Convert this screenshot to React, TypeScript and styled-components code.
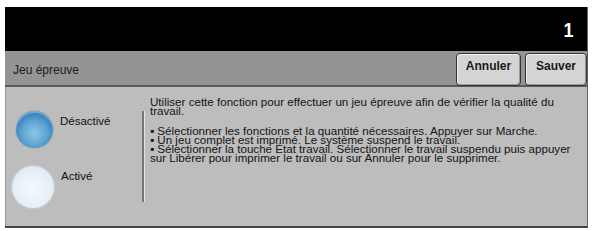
import React, { useState } from "react";
import styled, { createGlobalStyle } from "styled-components";

const GlobalStyle = createGlobalStyle`
  body {
    margin: 0;
    background: #ffffff;
    font-family: "Liberation Sans", Arial, sans-serif;
  }
`;

const options = [
  { id: "off", label: "Désactivé" },
  { id: "on", label: "Activé" },
];

const App: React.FC = () => {
  const [selected, setSelected] = useState<string>("off");

  return (
    <>
      <GlobalStyle />
      <Frame>
        <Header>
          <Counter>1</Counter>
        </Header>
        <TitleBar>
          <Title>Jeu épreuve</Title>
          <ButtonGroup>
            <ActionButton>Annuler</ActionButton>
            <ActionButton>Sauver</ActionButton>
          </ButtonGroup>
        </TitleBar>
        <Body>
          <OptionList>
            {options.map((option) => (
              <OptionRow key={option.id} onClick={() => setSelected(option.id)}>
                <Radio $active={selected === option.id} />
                <OptionLabel>{option.label}</OptionLabel>
              </OptionRow>
            ))}
          </OptionList>
          <Divider />
          <HelpText>
            <p>
              Utiliser cette fonction pour effectuer un jeu épreuve afin de vérifier la qualité du
              travail.
            </p>
            <p>
              ▪ Sélectionner les fonctions et la quantité nécessaires. Appuyer sur Marche.
              <br />▪ Un jeu complet est imprimé. Le système suspend le travail.
              <br />▪ Sélectionner la touche État travail. Sélectionner le travail suspendu puis appuyer
              sur Libérer pour imprimer le travail ou sur Annuler pour le supprimer.
            </p>
          </HelpText>
        </Body>
      </Frame>
    </>
  );
};

export default App;

const Frame = styled.div`
  margin: 7px 0 0 5px;
  width: 583px;
  height: 221px;
  display: flex;
  flex-direction: column;
  border-right: 1px solid #666;
  border-bottom: 2px solid #444;
  box-sizing: border-box;
`;

const Header = styled.div`
  height: 44px;
  background: #000;
  display: flex;
  justify-content: flex-end;
  align-items: center;
  padding-right: 13px;
`;

const Counter = styled.span`
  color: #fff;
  font-weight: bold;
  font-size: 20px;
  padding-top: 3px;
  transform: scaleX(0.9);
`;

const TitleBar = styled.div`
  height: 36px;
  background: #949494;
  border-bottom: 2px solid #5a5a5a;
  display: flex;
  justify-content: space-between;
  align-items: center;
  box-sizing: border-box;
`;

const Title = styled.span`
  font-size: 12px;
  color: #1c1c1c;
  padding-left: 8px;
  padding-top: 3px;
`;

const ButtonGroup = styled.div`
  display: flex;
  gap: 4px;
  align-self: flex-end;
  margin-bottom: -1px;
`;

const ActionButton = styled.button`
  width: 65px;
  height: 33px;
  background: #d4d4d4;
  border: 1px solid #333;
  border-radius: 4px;
  box-shadow: inset 1px 1px 0 #f2f2f2, inset -1px -1px 0 #9a9a9a;
  font-family: "Liberation Sans", Arial, sans-serif;
  font-weight: bold;
  font-size: 12px;
  color: #1a1a1a;
  padding: 0 0 8px;
  &:last-child {
    width: 62px;
  }
`;

const Body = styled.div`
  flex: 1;
  background: #bdbdbd;
  display: flex;
  border-left: 1px solid #9a9a9a;
`;

const OptionList = styled.div`
  width: 136px;
  display: flex;
  flex-direction: column;
  gap: 18px;
  padding: 24px 0 0 6px;
  box-sizing: border-box;
`;

const OptionRow = styled.div`
  display: flex;
  align-items: flex-start;
  gap: 7px;
  cursor: pointer;
`;

const Radio = styled.div<{ $active: boolean }>`
  width: ${(p) => (p.$active ? 37 : 42)}px;
  height: ${(p) => (p.$active ? 37 : 42)}px;
  margin-left: ${(p) => (p.$active ? 4 : 0)}px;
  border-radius: 50%;
  box-sizing: border-box;
  background: ${(p) =>
    p.$active
      ? "radial-gradient(circle at 50% 60%, #8fc6e4 0%, #5aa3d2 45%, #2a79b8 75%, #145d98 100%)"
      : "radial-gradient(circle at 50% 55%, #f4f9fd 0%, #e6f0f9 55%, #d5e5f3 85%, #c8dced 100%)"};
  box-shadow: ${(p) =>
    p.$active
      ? "inset 0 2px 1px rgba(255,255,255,0.35), 0 0 1px #1a4f7a"
      : "0 0 2px rgba(255,255,255,0.8)"};
`;

const OptionLabel = styled.span`
  font-size: 11.5px;
  color: #111;
  padding-top: 4px;
`;

const Divider = styled.div`
  width: 2px;
  height: 91px;
  margin-top: 24px;
  background: #767676;
  border-right: 1px solid #e4e4e4;
`;

const HelpText = styled.div`
  flex: 1;
  padding: 11px 8px 0 5px;
  font-size: 11.6px;
  line-height: 8.7px;
  color: #141414;
  p {
    margin: 0 0 12px;
  }
`;
